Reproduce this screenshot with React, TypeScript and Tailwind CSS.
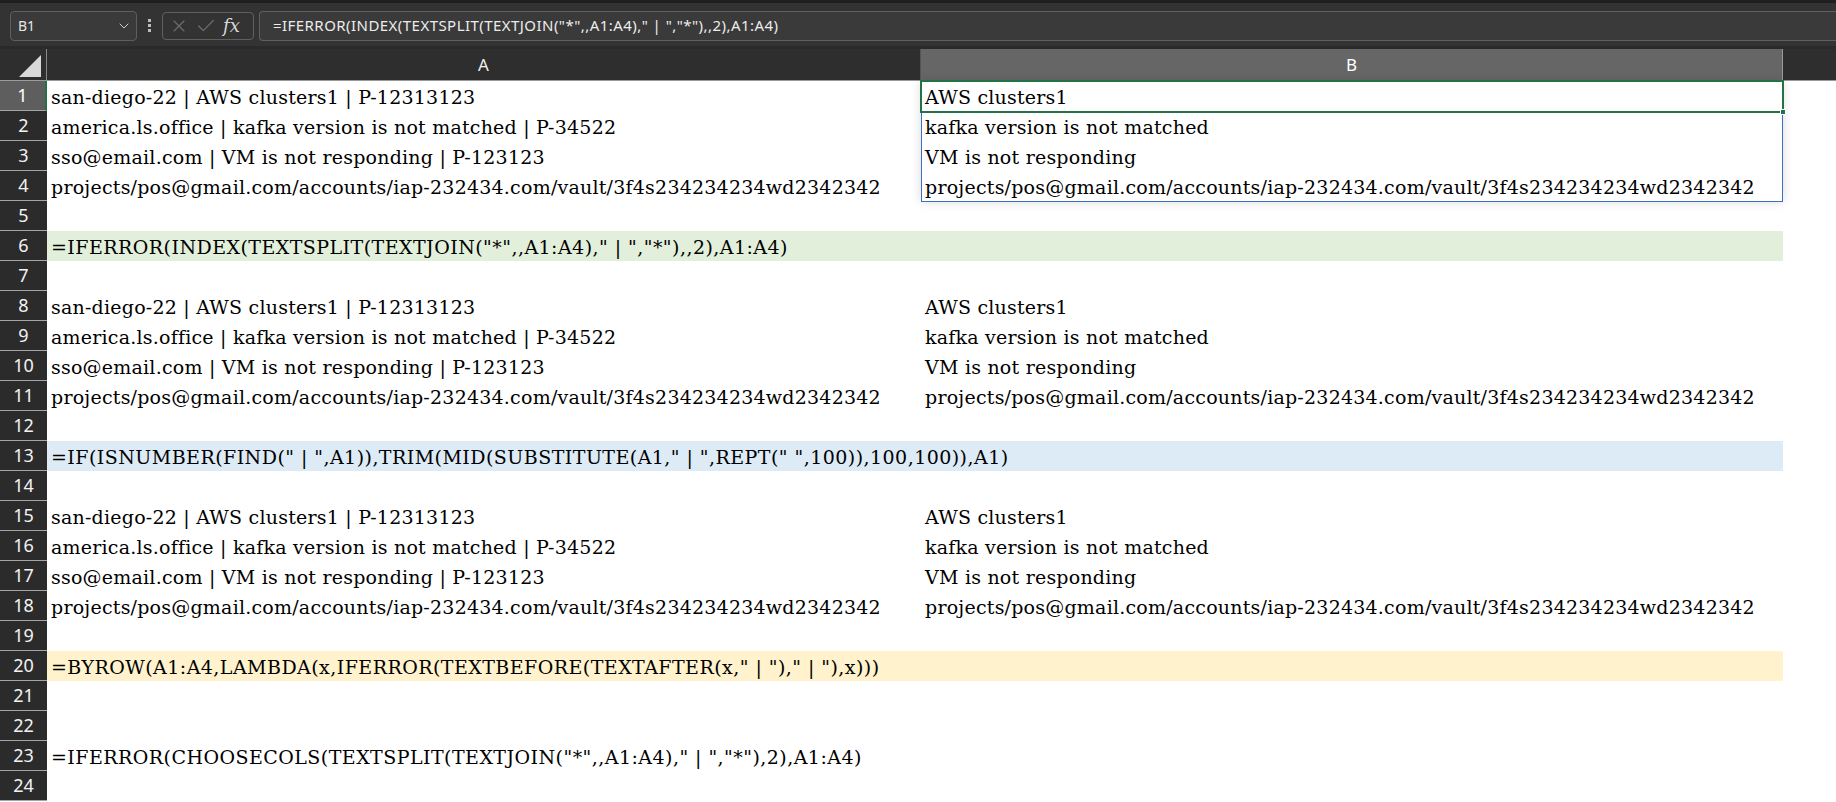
import React from 'react';
import { ChevronDown, X, Check } from 'lucide-react';

type Row = { a?: string; b?: string; fill?: string };

const A1 = 'san-diego-22 | AWS clusters1 | P-12313123';
const A2 = 'america.ls.office | kafka version is not matched | P-34522';
const A3 = 'sso@email.com | VM is not responding | P-123123';
const A4 = 'projects/pos@gmail.com/accounts/iap-232434.com/vault/3f4s234234234wd2342342';

const block: Row[] = [
  { a: A1, b: 'AWS clusters1' },
  { a: A2, b: 'kafka version is not matched' },
  { a: A3, b: 'VM is not responding' },
  { a: A4, b: A4 },
];

const rows: Row[] = [
  ...block,
  {},
  { a: '=IFERROR(INDEX(TEXTSPLIT(TEXTJOIN("*",,A1:A4)," | ","*"),,2),A1:A4)', fill: 'bg-[#e2efda]' },
  {},
  ...block,
  {},
  { a: '=IF(ISNUMBER(FIND(" | ",A1)),TRIM(MID(SUBSTITUTE(A1," | ",REPT(" ",100)),100,100)),A1)', fill: 'bg-[#ddebf7]' },
  {},
  ...block,
  {},
  { a: '=BYROW(A1:A4,LAMBDA(x,IFERROR(TEXTBEFORE(TEXTAFTER(x," | ")," | "),x)))', fill: 'bg-[#fff2cc]' },
  {},
  {},
  { a: '=IFERROR(CHOOSECOLS(TEXTSPLIT(TEXTJOIN("*",,A1:A4)," | ","*"),2),A1:A4)' },
  {},
];

const uiFont = { fontFamily: '"Noto Sans", "Open Sans", sans-serif' };
const cellFont = { fontFamily: '"DejaVu Serif", "Liberation Serif", serif' };

const FormulaBar: React.FC = () => (
  <div className="h-[46px] bg-[#333333] flex items-center pl-[10px] pt-[2px] border-t-[3px] border-[#1f1f1f]" style={uiFont}>
    <div className="w-[127px] h-[30px] rounded-[4px] border border-[#5f5f5f] bg-[#3a3a3a] flex items-center justify-between pl-[7px] pr-[4px]">
      <span className="text-[14px] text-[#e6e6e6]">B1</span>
      <ChevronDown className="w-[16px] h-[16px] text-[#cfcfcf]" strokeWidth={1.5} />
    </div>
    <div className="w-[25px] flex flex-col items-center gap-[2px]">
      <div className="w-[3px] h-[3px] bg-[#bdbdbd]" />
      <div className="w-[3px] h-[3px] bg-[#bdbdbd]" />
      <div className="w-[3px] h-[3px] bg-[#bdbdbd]" />
    </div>
    <div className="w-[92px] h-[28px] rounded-[4px] border border-[#5f5f5f] flex items-center px-[6px] gap-[6px]">
      <X className="w-[20px] h-[20px] text-[#6f6f6f]" strokeWidth={1.3} />
      <Check className="w-[22px] h-[22px] text-[#6f6f6f]" strokeWidth={1.3} />
      <span className="text-[18px] italic text-[#d8d8d8] leading-none" style={{ fontFamily: '"DejaVu Serif", serif' }}>fx</span>
    </div>
    <div className="flex-1 h-[30px] ml-[5px] rounded-l-[4px] border border-r-0 border-[#5f5f5f] bg-[#3a3a3a] flex items-center pl-[13px]">
      <span className="text-[15px] tracking-[0.45px] text-[#ececec] whitespace-pre">=IFERROR(INDEX(TEXTSPLIT(TEXTJOIN("*",,A1:A4)," | ","*"),,2),A1:A4)</span>
    </div>
  </div>
);

const App: React.FC = () => {
  return (
    <div className="w-[1836px] h-[802px] overflow-hidden bg-white flex flex-col">
      <FormulaBar />
      <div className="h-[3px] bg-[#2a2a2a]" />
      {/* column headers */}
      <div className="h-[32px] flex bg-[#2e2e2e] border-b border-[#9a9a9a]" style={uiFont}>
        <div className="w-[47px] border-r border-[#8a8a8a] flex items-end justify-end pr-[5px] pb-[3px]">
          <div className="w-0 h-0 border-l-[22px] border-l-transparent border-b-[22px] border-b-[#d9d9d9]" />
        </div>
        <div className="w-[874px] flex items-center justify-center text-[17px] text-[#f0f0f0] border-r border-[#555]">A</div>
        <div className="w-[862px] flex items-center justify-center text-[17px] text-white bg-[#666666] border-r border-[#9a9a9a]">B</div>
        <div className="flex-1" />
      </div>
      {/* grid */}
      <div className="relative flex-1">
        {rows.map((r, i) => (
          <div key={i} className="h-[30px] flex">
            <div
              className={`w-[47px] shrink-0 flex items-center justify-center text-[18px] border-b border-[#a6a6a6] ${
                i === 0 ? 'bg-[#5e5e5e] text-white border-r-2 border-r-[#217346]' : 'bg-[#2b2b2b] text-[#f2f2f2]'
              }`}
              style={uiFont}
            >
              {i + 1}
            </div>
            <div className={`w-[1736px] shrink-0 flex ${r.fill ?? ''}`} style={cellFont}>
              <div
                className={`w-[874px] shrink-0 flex items-end pl-[4px] pb-[1px] text-[19px] leading-[26px] text-black whitespace-pre overflow-visible ${
                  r.a?.startsWith('=') ? 'tracking-[0.45px]' : 'tracking-[0.22px]'
                }`}
              >
                {r.a}
              </div>
              <div className="w-[862px] shrink-0 flex items-end pl-[4px] pb-[1px] text-[19px] leading-[26px] tracking-[0.22px] text-black whitespace-pre overflow-hidden">
                {r.b}
              </div>
            </div>
          </div>
        ))}
        {/* spill range + active cell */}
        <div className="absolute left-[921px] top-0 w-[862px] h-[121px] border border-[#3a6fc4] shadow-[0_0_10px_rgba(0,0,0,0.15)] pointer-events-none" />
        <div className="absolute left-[920px] top-[-1px] w-[864px] h-[33px] border-2 border-[#217346] pointer-events-none" />
        <div className="absolute left-[1780px] top-[28px] w-[6px] h-[6px] bg-[#217346] border border-white pointer-events-none" />
      </div>
    </div>
  );
};

export default App;
